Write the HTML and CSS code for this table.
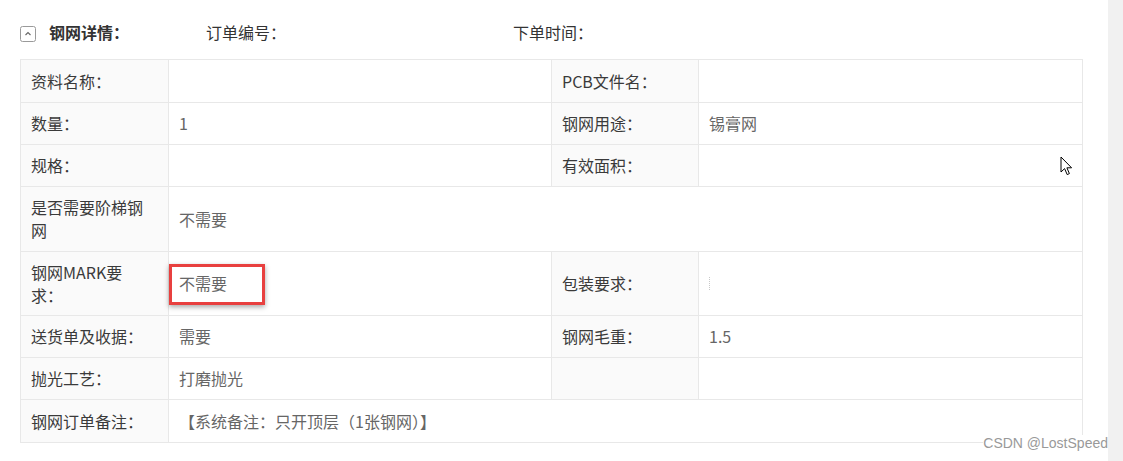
FILE: index.html
```html
<!DOCTYPE html>
<html lang="zh-CN">
<head>
<meta charset="utf-8">
<title>钢网详情</title>
<link rel="stylesheet" href="styles.css">
</head>
<body>
<div class="page">
  <div class="content">
    <div class="head">
      <span class="toggle">
        <svg width="16" height="16" viewBox="0 0 16 16"><rect x="0.5" y="0.5" width="15" height="15" rx="2" ry="2" fill="#fff" stroke="#9a9a9a"/><polyline points="5.5,9 8,6.5 10.5,9" fill="none" stroke="#666" stroke-width="1.1"/></svg>
      </span>
      <span class="title">钢网详情：</span>
      <span class="field">订单编号：</span>
      <span class="field">下单时间：</span>
    </div>
    <div class="grid">
      <div class="lbl">资料名称：</div><div class="val"></div><div class="lbl">PCB文件名：</div><div class="val"></div>
      <div class="lbl">数量：</div><div class="val">1</div><div class="lbl">钢网用途：</div><div class="val">锡膏网</div>
      <div class="lbl">规格：</div><div class="val"></div><div class="lbl">有效面积：</div><div class="val"></div>
      <div class="lbl multi">是否需要阶梯钢<br>网</div><div class="val span3">不需要</div>
      <div class="lbl multi">钢网MARK要<br>求：</div><div class="val mark-cell">不需要<span class="highlight"></span></div><div class="lbl">包装要求：</div><div class="val"><span class="caret"></span></div>
      <div class="lbl">送货单及收据：</div><div class="val">需要</div><div class="lbl">钢网毛重：</div><div class="val">1.5</div>
      <div class="lbl">抛光工艺：</div><div class="val">打磨抛光</div><div class="lbl"></div><div class="val"></div>
      <div class="lbl">钢网订单备注：</div><div class="val span3">【系统备注：只开顶层（1张钢网）】</div>
    </div>
  </div>
  <div class="scrollbar"></div>
  <svg class="cursor" width="13" height="20" viewBox="0 0 13 20"><path d="M1 1 L1 16 L4.6 12.6 L7.2 18.6 L9.4 17.6 L6.9 11.8 L11.6 11.8 Z" fill="#fff" stroke="#000" stroke-width="1" stroke-linejoin="miter"/></svg>
  <div class="watermark">CSDN @LostSpeed</div>
</div>
</body>
</html>
```
FILE: styles.css
```css
html, body {
  margin: 0;
  padding: 0;
  background: #fff;
}
body {
  font-family: "Noto Sans CJK SC", "Noto Sans", sans-serif;
  font-size: 16px;
  color: #333;
}
.page {
  position: relative;
  display: flex;
  width: 1123px;
  height: 461px;
  overflow: hidden;
}
.content {
  flex: 1;
  padding-left: 20px;
}
.scrollbar {
  width: 15px;
  background: #f1f1f1;
}
.head {
  height: 59px;
  box-sizing: border-box;
  padding-top: 4px;
  display: flex;
  align-items: center;
  line-height: 20px;
}
.toggle {
  width: 16px;
  height: 16px;
  margin-top: 4px;
  margin-right: 13px;
  display: flex;
}
.title {
  width: 157px;
  font-weight: bold;
  color: #333;
}
.field {
  width: 307px;
  color: #333;
}
.grid {
  display: grid;
  grid-template-columns: 147px 382px 146px 383px;
  grid-template-rows: 42px 41px 41px 64px 63px 41px 41px 42px;
  gap: 1px;
  padding: 1px;
  width: max-content;
  background: #e8e8e8;
}
.lbl, .val {
  display: flex;
  align-items: center;
  padding: 0 10px;
  line-height: 21px;
}
.lbl {
  background: #fafafa;
  color: #3a3a3a;
}
.lbl.multi {
  line-height: 23px;
}
.val {
  background: #fff;
  color: #666;
}
.span3 {
  grid-column: span 3;
}
.mark-cell {
  position: relative;
}
.highlight {
  position: absolute;
  left: 0;
  top: 12px;
  width: 96px;
  height: 41px;
  box-sizing: border-box;
  border: 3px solid #e8403f;
  box-shadow: 0 2px 5px rgba(0, 0, 0, 0.35);
}
.caret {
  display: block;
  width: 0;
  height: 13px;
  border-left: 1px dotted #c8c8c8;
}
.cursor {
  position: absolute;
  left: 1060px;
  top: 156px;
}
.watermark {
  position: absolute;
  right: 15px;
  top: 435px;
  font-family: "Liberation Sans", Arial, sans-serif;
  font-size: 14px;
  line-height: 16px;
  color: #999;
  background: #fff;
}
```
